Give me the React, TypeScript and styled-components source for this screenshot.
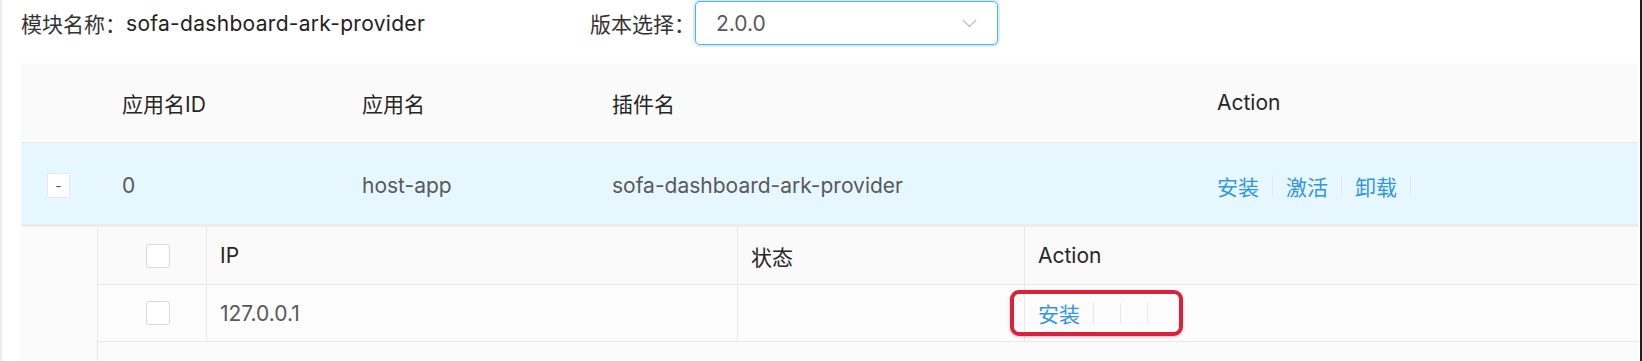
import React from 'react'
import styled, { createGlobalStyle } from 'styled-components'

const GlobalStyle = createGlobalStyle`
    html, body {
        margin: 0;
        padding: 0;
        background: #fff;
    }
    body {
        font-family: Inter, "Noto Sans CJK SC", sans-serif;
        font-size: 21px;
        color: #595959;
    }
`

const Page = styled.div`
    width: 1642px;
    height: 361px;
    box-sizing: border-box;
    border-left: 2px solid #ececec;
    border-right: 2px solid #1f1f1f;
    padding: 1px 2px 0 19px;
    overflow: hidden;
`

const TopBar = styled.div`
    display: flex;
    align-items: center;
    height: 44px;
`

const Field = styled.div<{ width?: number }>`
    display: flex;
    align-items: center;
    width: ${props => props.width ? `${props.width}px` : 'auto'};
`

const Label = styled.span`
    color: #333;
    white-space: nowrap;
`

const Value = styled.span`
    color: #222;
    letter-spacing: 0.3px;
`

const Select = styled.div`
    display: flex;
    align-items: center;
    justify-content: space-between;
    box-sizing: border-box;
    width: 303px;
    height: 44px;
    margin-left: 0;
    padding: 0 20px 0 20px;
    border: 1px solid #55adf2;
    border-radius: 5px;
    box-shadow: 0 0 0 2px rgba(24, 144, 255, 0.16);
    color: #595959;
    background: #fff;
`

const Table = styled.div`
    margin-top: 18px;
`

const Row = styled.div<{ variant?: 'head' | 'expanded' }>`
    display: grid;
    grid-template-columns: 79px 240px 250px 605px 1fr;
    align-items: center;
    box-sizing: border-box;
    height: ${props => props.variant === 'head' ? '80px' : '84px'};
    padding-top: ${props => props.variant === 'head' ? '0' : '4px'};
    background: ${props => props.variant === 'head' ? '#fafafa' : '#e6f7ff'};
    border-bottom: ${props => props.variant === 'head' ? '1px solid #e8e8e8' : '3px solid #ececec'};
    color: ${props => props.variant === 'head' ? '#262626' : '#595959'};
`

const Cell = styled.div`
    padding: 0 22px;
    white-space: nowrap;
    display: flex;
    align-items: center;
`

const ExpandCell = styled.div`
    display: flex;
    padding-left: 26px;
`

const ExpandButton = styled.div`
    width: 23px;
    height: 25px;
    box-sizing: border-box;
    border: 1px solid #e8e8e8;
    border-radius: 2px;
    background: #fff;
    display: flex;
    align-items: center;
    justify-content: center;
    font-size: 14px;
    line-height: 1;
    color: #595959;
`

const ExpandedArea = styled.div`
    background: #fbfbfb;
    padding-left: 76px;
    height: 140px;
`

const SubTable = styled.div`
    border-left: 1px solid #e8e8e8;
    border-top-left-radius: 4px;
    height: 100%;
`

const SubRow = styled.div<{ head?: boolean }>`
    display: grid;
    grid-template-columns: 109px 531px 287px 1fr;
    height: ${props => props.head ? '57px' : '56px'};
    border-bottom: 1px solid #e8e8e8;
    background: ${props => props.head ? '#fafafa' : '#fcfcfc'};
    color: ${props => props.head ? '#262626' : '#595959'};
`

const SubCell = styled.div<{ last?: boolean }>`
    position: relative;
    display: flex;
    align-items: center;
    padding-left: 13px;
    border-right: ${props => props.last ? 'none' : '1px solid #e8e8e8'};
    white-space: nowrap;
`

const CheckCell = styled(SubCell)`
    padding-left: 48px;
`

const Checkbox = styled.span`
    width: 24px;
    height: 24px;
    box-sizing: border-box;
    border: 1px solid #d9d9d9;
    border-radius: 3px;
    background: #fff;
`

const Actions = styled.div`
    display: flex;
    align-items: center;
`

const Link = styled.a`
    color: #3396e3;
    text-decoration: none;
    cursor: pointer;
`

const Divider = styled.span`
    width: 1px;
    height: 21px;
    margin: 0 13px;
    background: #e8e8e8;
`

const Highlight = styled.div`
    position: absolute;
    left: -15px;
    top: 5px;
    width: 173px;
    height: 46px;
    box-sizing: border-box;
    border: 4px solid #d8213a;
    border-radius: 9px;
    box-shadow: 0 1px 3px rgba(0, 0, 0, 0.25);
    pointer-events: none;
`

function Chevron() {
    return (
        <svg width="15" height="9" viewBox="0 0 15 9" fill="none">
            <path d="M1 1 L7.5 7.5 L14 1" stroke="#bfbfbf" strokeWidth="1.4" />
        </svg>
    )
}

function ActionLinks({ labels }: { labels: string[] }) {
    return (
        <Actions>
            {labels.map((label, i) => (
                <React.Fragment key={i}>
                    <Link>{label}</Link>
                    <Divider />
                </React.Fragment>
            ))}
        </Actions>
    )
}

export default function App() {
    return (
        <>
            <GlobalStyle />
            <Page>
                <TopBar>
                    <Field width={569}>
                        <Label>模块名称：</Label>
                        <Value>sofa-dashboard-ark-provider</Value>
                    </Field>
                    <Field>
                        <Label>版本选择：</Label>
                        <Select>
                            <span>2.0.0</span>
                            <Chevron />
                        </Select>
                    </Field>
                </TopBar>

                <Table>
                    <Row variant="head">
                        <Cell />
                        <Cell>应用名ID</Cell>
                        <Cell>应用名</Cell>
                        <Cell>插件名</Cell>
                        <Cell>Action</Cell>
                    </Row>
                    <Row variant="expanded">
                        <ExpandCell>
                            <ExpandButton>-</ExpandButton>
                        </ExpandCell>
                        <Cell>0</Cell>
                        <Cell>host-app</Cell>
                        <Cell>sofa-dashboard-ark-provider</Cell>
                        <Cell>
                            <ActionLinks labels={['安装', '激活', '卸载']} />
                        </Cell>
                    </Row>
                    <ExpandedArea>
                        <SubTable>
                            <SubRow head>
                                <CheckCell><Checkbox /></CheckCell>
                                <SubCell>IP</SubCell>
                                <SubCell>状态</SubCell>
                                <SubCell last>Action</SubCell>
                            </SubRow>
                            <SubRow>
                                <CheckCell><Checkbox /></CheckCell>
                                <SubCell>127.0.0.1</SubCell>
                                <SubCell />
                                <SubCell last>
                                    <ActionLinks labels={['安装', '', '']} />
                                    <Highlight />
                                </SubCell>
                            </SubRow>
                        </SubTable>
                    </ExpandedArea>
                </Table>
            </Page>
        </>
    )
}
